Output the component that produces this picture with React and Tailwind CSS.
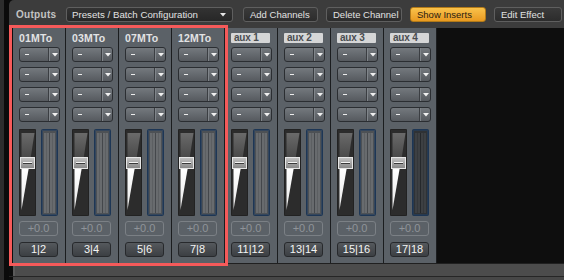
import React from "react";

const channels = [
  { name: "01MTo", route: "1|2" },
  { name: "03MTo", route: "3|4" },
  { name: "07MTo", route: "5|6" },
  { name: "12MTo", route: "7|8" },
  { name: "aux 1", route: "11|12", aux: true },
  { name: "aux 2", route: "13|14", aux: true },
  { name: "aux 3", route: "15|16", aux: true },
  { name: "aux 4", route: "17|18", aux: true, dim: true },
];

function TopButton({ label, width, active }) {
  return (
    <div
      className={`h-[15px] ${width} shrink-0 rounded-[3px] border flex items-center pl-[6px] text-[9.5px] leading-none ${
        active
          ? "bg-linear-to-b from-[#f9c24a] to-[#e99a1f] border-[#b27a19] text-[#2a2010]"
          : "bg-linear-to-b from-[#3a3a3a] to-[#2c2c2c] border-[#5f5f5f] text-[#e2e2e2]"
      }`}
    >
      {label}
    </div>
  );
}

function Dropdown() {
  return (
    <div className="w-[41px] h-[15px] rounded-[3px] border border-[#2b2e32] bg-linear-to-b from-[#74797e] to-[#565a5f] flex overflow-hidden">
      <div className="w-[28px] flex items-center pl-[5px]">
        <span className="block w-[4px] h-px bg-[#ececec]" />
      </div>
      <div className="w-px bg-[#3b3e42]" />
      <div className="w-px bg-[#80858a]" />
      <div className="flex-1 flex items-center justify-center pt-[1px]">
        <svg width="6" height="4" viewBox="0 0 6 4">
          <polygon points="0,0 6,0 3,3.5" fill="#f0f0f0" />
        </svg>
      </div>
    </div>
  );
}

function Fader() {
  return (
    <svg width="17" height="87" viewBox="0 0 17 87" className="shrink-0">
      <defs>
        <linearGradient id="wedgeTop" x1="0" y1="0" x2="0" y2="1">
          <stop offset="0" stopColor="#6a6a6a" />
          <stop offset="1" stopColor="#4a4a4a" />
        </linearGradient>
        <linearGradient id="wedgeLow" x1="0" y1="0" x2="0" y2="1">
          <stop offset="0" stopColor="#ffffff" />
          <stop offset="1" stopColor="#e8e8e8" />
        </linearGradient>
        <linearGradient id="knob" x1="0" y1="0" x2="0" y2="1">
          <stop offset="0" stopColor="#c4c4c4" />
          <stop offset="1" stopColor="#858585" />
        </linearGradient>
      </defs>
      <rect x="0" y="0" width="17" height="87" rx="1" fill="#2c2c2c" />
      <rect x="0.5" y="0.5" width="16" height="86" rx="1" fill="none" stroke="#222" />
      <polygon points="2.5,4 15.5,4 11.8,28 2.5,28" fill="url(#wedgeTop)" />
      <polygon points="2.5,40 9.6,40 2.5,81" fill="url(#wedgeLow)" />
      <rect x="1" y="28" width="15" height="12" fill="#1e1e1e" />
      <rect x="1.5" y="28.5" width="14" height="11" fill="url(#knob)" stroke="#e6e6e6" strokeWidth="1" />
      <rect x="4" y="33" width="9" height="1" fill="#f4f4f4" />
      <rect x="4" y="34" width="9" height="1" fill="#3a3a3a" />
    </svg>
  );
}

function Meter({ dim }) {
  const col = dim ? "#3d4043" : "#686b6e";
  const bg = dim ? "#2f3235" : "#4d5155";
  return (
    <svg width="17" height="87" viewBox="0 0 17 87" className="shrink-0">
      <rect x="0.5" y="0.5" width="16" height="86" rx="1" fill={bg} stroke="#1d3655" />
      <rect x="1.5" y="1.5" width="14" height="84" fill="none" stroke="#243f60" strokeOpacity="0.6" />
      <rect x="3" y="4" width="5" height="80" fill={col} />
      <rect x="9" y="4" width="5" height="80" fill={col} />
      <rect x="5" y="4" width="1" height="80" fill={dim ? "#34373a" : "#5c5f62"} />
      <rect x="11" y="4" width="1" height="80" fill={dim ? "#34373a" : "#5c5f62"} />
      <rect x="8" y="4" width="1" height="80" fill={dim ? "#25282b" : "#44474b"} />
    </svg>
  );
}

function Strip({ ch }) {
  return (
    <div className="w-[53px] h-full shrink-0 flex">
      <div className="w-[52px] h-full bg-[#5b6167] flex flex-col pl-[6px] pt-[5px]">
        <div className="h-[10px] flex items-center">
          {ch.aux ? (
            <div className="w-[39px] h-[10px] bg-[#d5d6d7] rounded-[1px] flex items-center pl-[3px] text-[10px] font-bold leading-none text-[#4a4d50] tracking-[-0.2px]">
              {ch.name}
            </div>
          ) : (
            <span className="text-[10.5px] font-bold leading-none text-[#e2e3e4] tracking-[0.2px]">
              {ch.name}
            </span>
          )}
        </div>
        <div className="mt-[4px] flex flex-col gap-[5px]">
          <Dropdown />
          <Dropdown />
          <Dropdown />
          <Dropdown />
        </div>
        <div className="mt-[7px] flex gap-[5px]">
          <Fader />
          <Meter dim={ch.dim} />
        </div>
        <div className="mt-[5px] w-[39px] h-[15px] rounded-[3px] border border-[#7b8085] flex items-center justify-center text-[11px] leading-none text-[#8f9499]">
          +0.0
        </div>
        <div className="mt-[6px] w-[39px] h-[15px] rounded-[3px] border border-[#27292c] bg-linear-to-b from-[#55595d] to-[#3c3f43] flex items-center justify-center text-[11px] leading-none text-[#f4f4f4]">
          {ch.route}
        </div>
      </div>
      <div className="w-px h-full bg-[#1b1d1f]" />
    </div>
  );
}

export default function App() {
  return (
    <div className="relative w-[564px] h-[280px] overflow-hidden flex bg-[#0d0d0d] font-['Liberation_Sans',Arial,sans-serif]">
      {/* left edge */}
      <div className="w-[9px] h-full flex shrink-0">
        <div className="w-[4px] bg-[#2d2d2d]" />
        <div className="flex-1 bg-[#0b0b0b]" />
      </div>

      <div className="flex-1 flex flex-col min-w-0">
        {/* toolbar */}
        <div className="h-[28px] shrink-0 bg-[#3c3c3c] rounded-tl-[5px] flex items-start pt-[7px] pl-[7px]">
          <div className="w-[50px] h-[15px] flex items-center text-[10px] font-bold text-[#c3c3c3] tracking-[0.3px] leading-none">
            Outputs
          </div>
          <div className="w-[167px] h-[15px] shrink-0 rounded-[3px] border border-[#5f5f5f] bg-linear-to-b from-[#333] to-[#272727] flex items-center pl-[5px] pr-[6px] text-[9.7px] leading-none text-[#e2e2e2]">
            <span className="flex-1">Presets / Batch Configuration</span>
            <svg width="6" height="4" viewBox="0 0 6 4">
              <polygon points="0,0 6,0 3,3.5" fill="#e6e6e6" />
            </svg>
          </div>
          <div className="ml-[10px] flex gap-[8px]">
            <TopButton label="Add Channels" width="w-[75px]" />
            <TopButton label="Delete Channel" width="w-[76px]" />
            <TopButton label="Show Inserts" width="w-[76px]" active />
            <TopButton label="Edit Effect" width="w-[68px]" />
          </div>
        </div>

        {/* mixer */}
        <div className="h-[235px] shrink-0 flex bg-[#0e0e0e] pl-[4px]">
          {channels.map((ch) => (
            <Strip key={ch.name} ch={ch} />
          ))}
        </div>

        {/* bottom */}
        <div className="flex-1 flex flex-col">
          <div className="h-px bg-[#202020]" />
          <div className="h-[12px] bg-[#4c4c4c] border-l-2 border-[#5a5a5a] ml-[4px]" />
          <div className="h-px bg-[#262626]" />
          <div className="flex-1 bg-[#474747] ml-[4px]" />
        </div>
      </div>

      {/* selection highlight */}
      <div className="absolute left-[9px] top-[25px] w-[219px] h-[241px] border-[3px] border-[#f65a5a] pointer-events-none" />
    </div>
  );
}
